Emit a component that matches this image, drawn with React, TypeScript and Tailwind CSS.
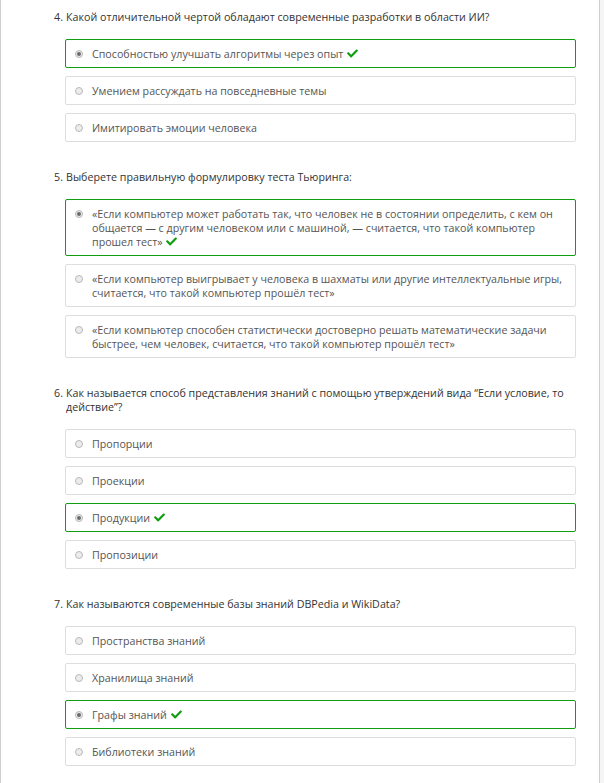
import React from "react";
import { FaCheck } from "react-icons/fa";

type Q = { n: number; text: string; options: string[]; correct: number };

const questions: Q[] = [
  {
    n: 4,
    text: "Какой отличительной чертой обладают современные разработки в области ИИ?",
    options: [
      "Способностью улучшать алгоритмы через опыт",
      "Умением рассуждать на повседневные темы",
      "Имитировать эмоции человека",
    ],
    correct: 0,
  },
  {
    n: 5,
    text: "Выберете правильную формулировку теста Тьюринга:",
    options: [
      "«Если компьютер может работать так, что человек не в состоянии определить, с кем он общается — с другим человеком или с машиной, — считается, что такой компьютер прошел тест»",
      "«Если компьютер выигрывает у человека в шахматы или другие интеллектуальные игры, считается, что такой компьютер прошёл тест»",
      "«Если компьютер способен статистически достоверно решать математические задачи быстрее, чем человек, считается, что такой компьютер прошёл тест»",
    ],
    correct: 0,
  },
  {
    n: 6,
    text: "Как называется способ представления знаний с помощью утверждений вида \u201cЕсли условие, то действие\u201d?",
    options: ["Пропорции", "Проекции", "Продукции", "Пропозиции"],
    correct: 2,
  },
  {
    n: 7,
    text: "Как называются современные базы знаний DBPedia и WikiData?",
    options: ["Пространства знаний", "Хранилища знаний", "Графы знаний", "Библиотеки знаний"],
    correct: 2,
  },
];

function Radio({ checked }: { checked: boolean }) {
  return (
    <span className="mt-[3px] flex h-[8px] w-[8px] shrink-0 items-center justify-center rounded-full border border-solid border-[#b9b9b9] bg-[#ececec]">
      {checked && <span className="h-[4px] w-[4px] rounded-full bg-[#6a6a6a]" />}
    </span>
  );
}

export default function App() {
  return (
    <div className="min-h-[783px] w-[604px] bg-[#f5f5f5]" style={{ fontFamily: '"Open Sans", "Noto Sans", sans-serif' }}>
      <div className="min-h-[783px] w-[600px] border-l border-r border-solid border-[#cfcfcf] bg-white pl-[53px] pr-[23px] pt-[10px] text-[10.7px] leading-[14px]">
        {questions.map((q) => (
          <div key={q.n} className="mb-[28px]">
            <div className="mb-[15px] flex text-[#333]">
              <span className="w-[12px] shrink-0">{q.n}.</span>
              <span className="pr-[12px]">{q.text}</span>
            </div>
            <div className="ml-[11px] flex flex-col gap-[8px]">
              {q.options.map((o, i) => {
                const ok = i === q.correct;
                return (
                  <div
                    key={i}
                    className={
                      ok
                        ? "flex h-auto gap-[9px] rounded-[2px] border border-solid border-[#109e10] bg-white pb-[6px] pl-[9px] pr-[8px] pt-[7px] text-[#555]"
                        : "flex h-auto gap-[9px] rounded-[2px] border border-solid border-[#dedede] bg-white pb-[6px] pl-[9px] pr-[8px] pt-[7px] text-[#555]"
                    }
                  >
                    <Radio checked={ok} />
                    <div>
                      {o}
                      {ok && (
                        <FaCheck className="ml-[4px] mt-[1px] inline-block h-[11px] w-[11px] align-top text-[#109e10]" />
                      )}
                    </div>
                  </div>
                );
              })}
            </div>
          </div>
        ))}
      </div>
    </div>
  );
}
